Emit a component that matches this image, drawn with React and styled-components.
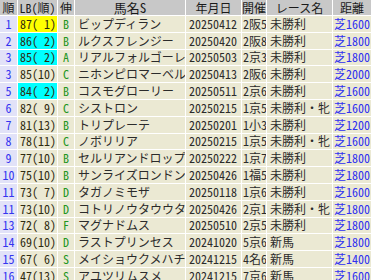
import React from 'react';
import styled, { createGlobalStyle } from 'styled-components';

const rows = [
  ['1', '87( 1)', 'B', 'ビップディラン', '20250412', '2阪5', '未勝利', '芝1600', 'top'],
  ['2', '86( 2)', 'B', 'ルクスフレンジー', '20250420', '2阪8', '未勝利', '芝1800', 'hi'],
  ['3', '85( 2)', 'A', 'リアルフォルゴーレ', '20250503', '2京3', '未勝利', '芝1800', 'hi'],
  ['3', '85(10)', 'C', 'ニホンピロマーベル', '20250413', '2阪6', '未勝利', '芝2000', ''],
  ['5', '84( 2)', 'B', 'コスモグローリー', '20250511', '2京6', '未勝利', '芝1600', 'hi'],
  ['6', '82( 9)', 'C', 'シストロン', '20250215', '1京5', '未勝利・牝', '芝1600', ''],
  ['7', '81(13)', 'B', 'トリプレーテ', '20250201', '1小3', '未勝利', '芝1200', ''],
  ['8', '78(11)', 'C', 'ノボリリア', '20250215', '1京5', '未勝利・牝', '芝1600', ''],
  ['9', '77(10)', 'B', 'セルリアンドロップ', '20250222', '1京7', '未勝利', '芝1800', ''],
  ['10', '75(10)', 'B', 'サンライズロンドン', '20250426', '1福5', '未勝利', '芝1800', ''],
  ['11', '73( 7)', 'D', 'タガノミモザ', '20250118', '1京6', '未勝利', '芝1600', ''],
  ['11', '73(10)', 'D', 'コトリノウタウウタ', '20250426', '2京1', '未勝利・牝', '芝1800', ''],
  ['13', '72( 8)', 'F', 'マグナドムス', '20250510', '2京5', '未勝利', '芝1800', ''],
  ['14', '69(10)', 'D', 'ラストプリンセス', '20241020', '5京6', '新馬', '芝1800', ''],
  ['15', '67( 6)', 'S', 'メイショウクメハチ', '20241215', '4名6', '新馬', '芝1400', ''],
  ['16', '47(13)', 'S', 'アユツリムスメ', '20241215', '7京6', '新馬', '芝1600', ''],
];

const lbColors = { top: '#ffff00', hi: '#00ffff' };

const GlobalStyle = createGlobalStyle`
  html, body {
    margin: 0;
    padding: 0;
    background: #ffffff;
    overflow: hidden;
  }
  body {
    font-family: "Noto Sans CJK JP", "Noto Sans", sans-serif;
  }
`;

const Table = styled.div`
  display: flex;
  flex-direction: column;
  gap: 1px;
  width: 371px;
  height: 280px;
  overflow: hidden;
`;

const Row = styled.div`
  display: grid;
  grid-template-columns: 17px 39px 16px 110px 55px 24px 65px 38px;
  column-gap: 1px;
  height: ${(p) => (p.$head ? '15px' : '15.8px')};
  flex-shrink: 0;
`;

const Head = styled.div`
  background: #c8c8c8;
  color: #1a1a1a;
  font-size: ${(p) => (p.$big ? '13px' : '12px')};
  line-height: 15px;
  text-align: center;
  white-space: nowrap;
  overflow: hidden;
  font-feature-settings: "hwid";
`;

const Cell = styled.div`
  display: flex;
  align-items: center;
  justify-content: ${(p) => (p.$center ? 'center' : 'flex-start')};
  padding-left: ${(p) => (p.$center ? 0 : p.$pad ?? 2)}px;
  background: ${(p) => p.$bg || '#ebe9d3'};
  color: ${(p) => p.$color || '#2b2b2b'};
  font-size: 12px;
  line-height: 1;
  white-space: pre;
  overflow: hidden;
  font-feature-settings: "hwid";
`;

const App = () => (
  <>
    <GlobalStyle />
    <Table>
      <Row $head>
        <Head>順</Head>
        <Head>LB(順)</Head>
        <Head>伸</Head>
        <Head $big>馬名S</Head>
        <Head>年月日</Head>
        <Head>開催</Head>
        <Head>レース名</Head>
        <Head>距離</Head>
      </Row>
      {rows.map((r, i) => (
        <Row key={i}>
          <Cell $center $bg="#e2e2f8" $color="#3434f0">{r[0]}</Cell>
          <Cell $bg={lbColors[r[8]]} $color="#2e2a10">{r[1]}</Cell>
          <Cell $center $color="#1f961f">{r[2]}</Cell>
          <Cell $pad={3}>{r[3]}</Cell>
          <Cell $pad={3}>{r[4]}</Cell>
          <Cell $pad={1}>{r[5]}</Cell>
          <Cell $pad={3}>{r[6]}</Cell>
          <Cell $pad={1} $color="#2f2ff0">{r[7]}</Cell>
        </Row>
      ))}
    </Table>
  </>
);

export default App;
